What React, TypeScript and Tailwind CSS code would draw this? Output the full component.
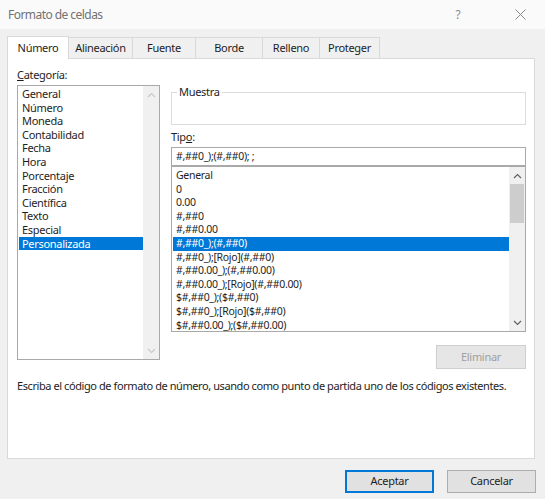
import React from "react";

const font = { fontFamily: '"Noto Sans", "Open Sans", sans-serif' };

const tabs = ["Número", "Alineación", "Fuente", "Borde", "Relleno", "Proteger"];
const tabWidths = ["w-[62px]", "w-[64px]", "w-[63px]", "w-[67px]", "w-[57px]", "w-[60px]"];

const categories = [
  "General",
  "Número",
  "Moneda",
  "Contabilidad",
  "Fecha",
  "Hora",
  "Porcentaje",
  "Fracción",
  "Científica",
  "Texto",
  "Especial",
  "Personalizada",
];

const formats = [
  "General",
  "0",
  "0.00",
  "#,##0",
  "#,##0.00",
  "#,##0_);(#,##0)",
  "#,##0_);[Rojo](#,##0)",
  "#,##0.00_);(#,##0.00)",
  "#,##0.00_);[Rojo](#,##0.00)",
  "$#,##0_);($#,##0)",
  "$#,##0_);[Rojo]($#,##0)",
  "$#,##0.00_);($#,##0.00)",
];

function Chevron({ up, dark }: { up?: boolean; dark?: boolean }) {
  return (
    <svg width="9" height="6" viewBox="0 0 9 6" className="block">
      <polyline
        points={up ? "1,5 4.5,1.5 8,5" : "1,1 4.5,4.5 8,1"}
        fill="none"
        stroke={dark ? "#606060" : "#c8c8c8"}
        strokeWidth="1.2"
      />
    </svg>
  );
}

function ListBox({
  items,
  selected,
  className,
  thumb,
}: {
  items: string[];
  selected: number;
  className: string;
  thumb?: boolean;
}) {
  return (
    <div className={`flex border border-[#a9a9a9] bg-white ${className}`}>
      <div className={`flex-1 flex flex-col pl-[1px] overflow-hidden ${thumb ? "pt-[2px]" : "pt-[1px]"}`}>
        {items.map((it, i) => (
          <div
            key={i}
            className={`h-[13.6px] leading-[13.6px] pl-[3px] whitespace-nowrap ${
              i === selected ? "bg-[#0078d7] text-white" : "text-[#1e1e1e]"
            }`}
          >
            {it}
          </div>
        ))}
      </div>
      <div className="w-[16px] bg-[#f0f0f0] flex flex-col items-center">
        <div className="h-[17px] flex items-center justify-center">
          <Chevron up dark={thumb} />
        </div>
        <div className="flex-1 w-full px-[1px]">
          {thumb && <div className="h-[39px] bg-[#cdcdcd]" />}
        </div>
        <div className="h-[17px] flex items-center justify-center">
          <Chevron dark={thumb} />
        </div>
      </div>
    </div>
  );
}

export default function App() {
  return (
    <div style={font} className="w-[545px] h-[499px] bg-[#f0f0f0] text-[11px] tracking-[-0.3px] text-[#1e1e1e] flex flex-col overflow-hidden">
      {/* title bar */}
      <div className="h-[29px] bg-[#fafafa] flex items-center pl-[8px] text-[12px] text-[#727272]">
        <span className="flex-1 tracking-[-0.55px]">Formato de celdas</span>
        <span className="w-[20px] mr-[27px] text-center text-[12px] text-[#8a8a8a]">?</span>
        <span className="w-[50px] flex justify-center">
          <svg width="11" height="11" viewBox="0 0 11 11">
            <path d="M0.5 0.5 L10.5 10.5 M10.5 0.5 L0.5 10.5" stroke="#8a8a8a" strokeWidth="1" />
          </svg>
        </span>
      </div>

      {/* tabs */}
      <div className="mt-[6px] mx-[7px] h-[23px] flex items-end">
        {tabs.map((t, i) => (
          <div
            key={t}
            className={`${tabWidths[i]} flex items-center justify-center border-[#d9d9d9] ${
              i === 0
                ? "h-[23px] bg-white border-l border-t border-r -mb-[1px] relative z-10"
                : "h-[21px] bg-[#f0f0f0] border-t border-r"
            }`}
          >
            {t}
          </div>
        ))}
      </div>

      {/* panel */}
      <div className="mx-[7px] w-[528px] h-[401px] bg-white border border-[#d9d9d9] flex flex-col pl-[9px] pr-[8px]">
        <div className="flex gap-[11px]">
          <div className="w-[143px] flex flex-col pt-[8px]">
            <div className="h-[16px] leading-[16px]">
              <span className="underline">C</span>ategoría:
            </div>
            <ListBox items={categories} selected={11} className="mt-[2px] h-[275px]" />
          </div>
          <div className="flex-1 flex flex-col pt-[25px]">
            <fieldset className="border border-[#dcdcdc] h-[41px] px-[5px]">
              <legend className="px-[2px] leading-[16px]">Muestra</legend>
            </fieldset>
            <div className="mt-[4px] h-[16px] leading-[16px]">
              Tip<span className="underline">o</span>:
            </div>
            <div className="mt-[2px] h-[19px] border border-[#a9a9a9] flex items-center pl-[4px] text-[10.5px]">
              #,##0_);(#,##0); ;
            </div>
            <ListBox items={formats} selected={5} thumb className="h-[166px] text-[10.5px]" />
            <div className="flex justify-end mt-[13px]">
              <div className="w-[90px] h-[24px] border border-[#cfcfcf] bg-[#e6e6e6] text-[#a0a0a0] flex items-center justify-center">
                Eliminar
              </div>
            </div>
          </div>
        </div>
        <div className="mt-[9px] leading-[16px] whitespace-nowrap tracking-[-0.42px]">
          Escriba el código de formato de número, usando como punto de partida uno de los códigos existentes.
        </div>
      </div>

      {/* footer */}
      <div className="flex justify-end gap-[13px] pr-[9px] mt-[11px]">
        <div className="w-[89px] h-[23px] border border-[#0078d7] shadow-[inset_0_0_0_1px_#0078d7] bg-[#e1e1e1] flex items-center justify-center">
          Aceptar
        </div>
        <div className="w-[89px] h-[23px] border border-[#adadad] bg-[#e1e1e1] flex items-center justify-center">
          Cancelar
        </div>
      </div>
    </div>
  );
}
